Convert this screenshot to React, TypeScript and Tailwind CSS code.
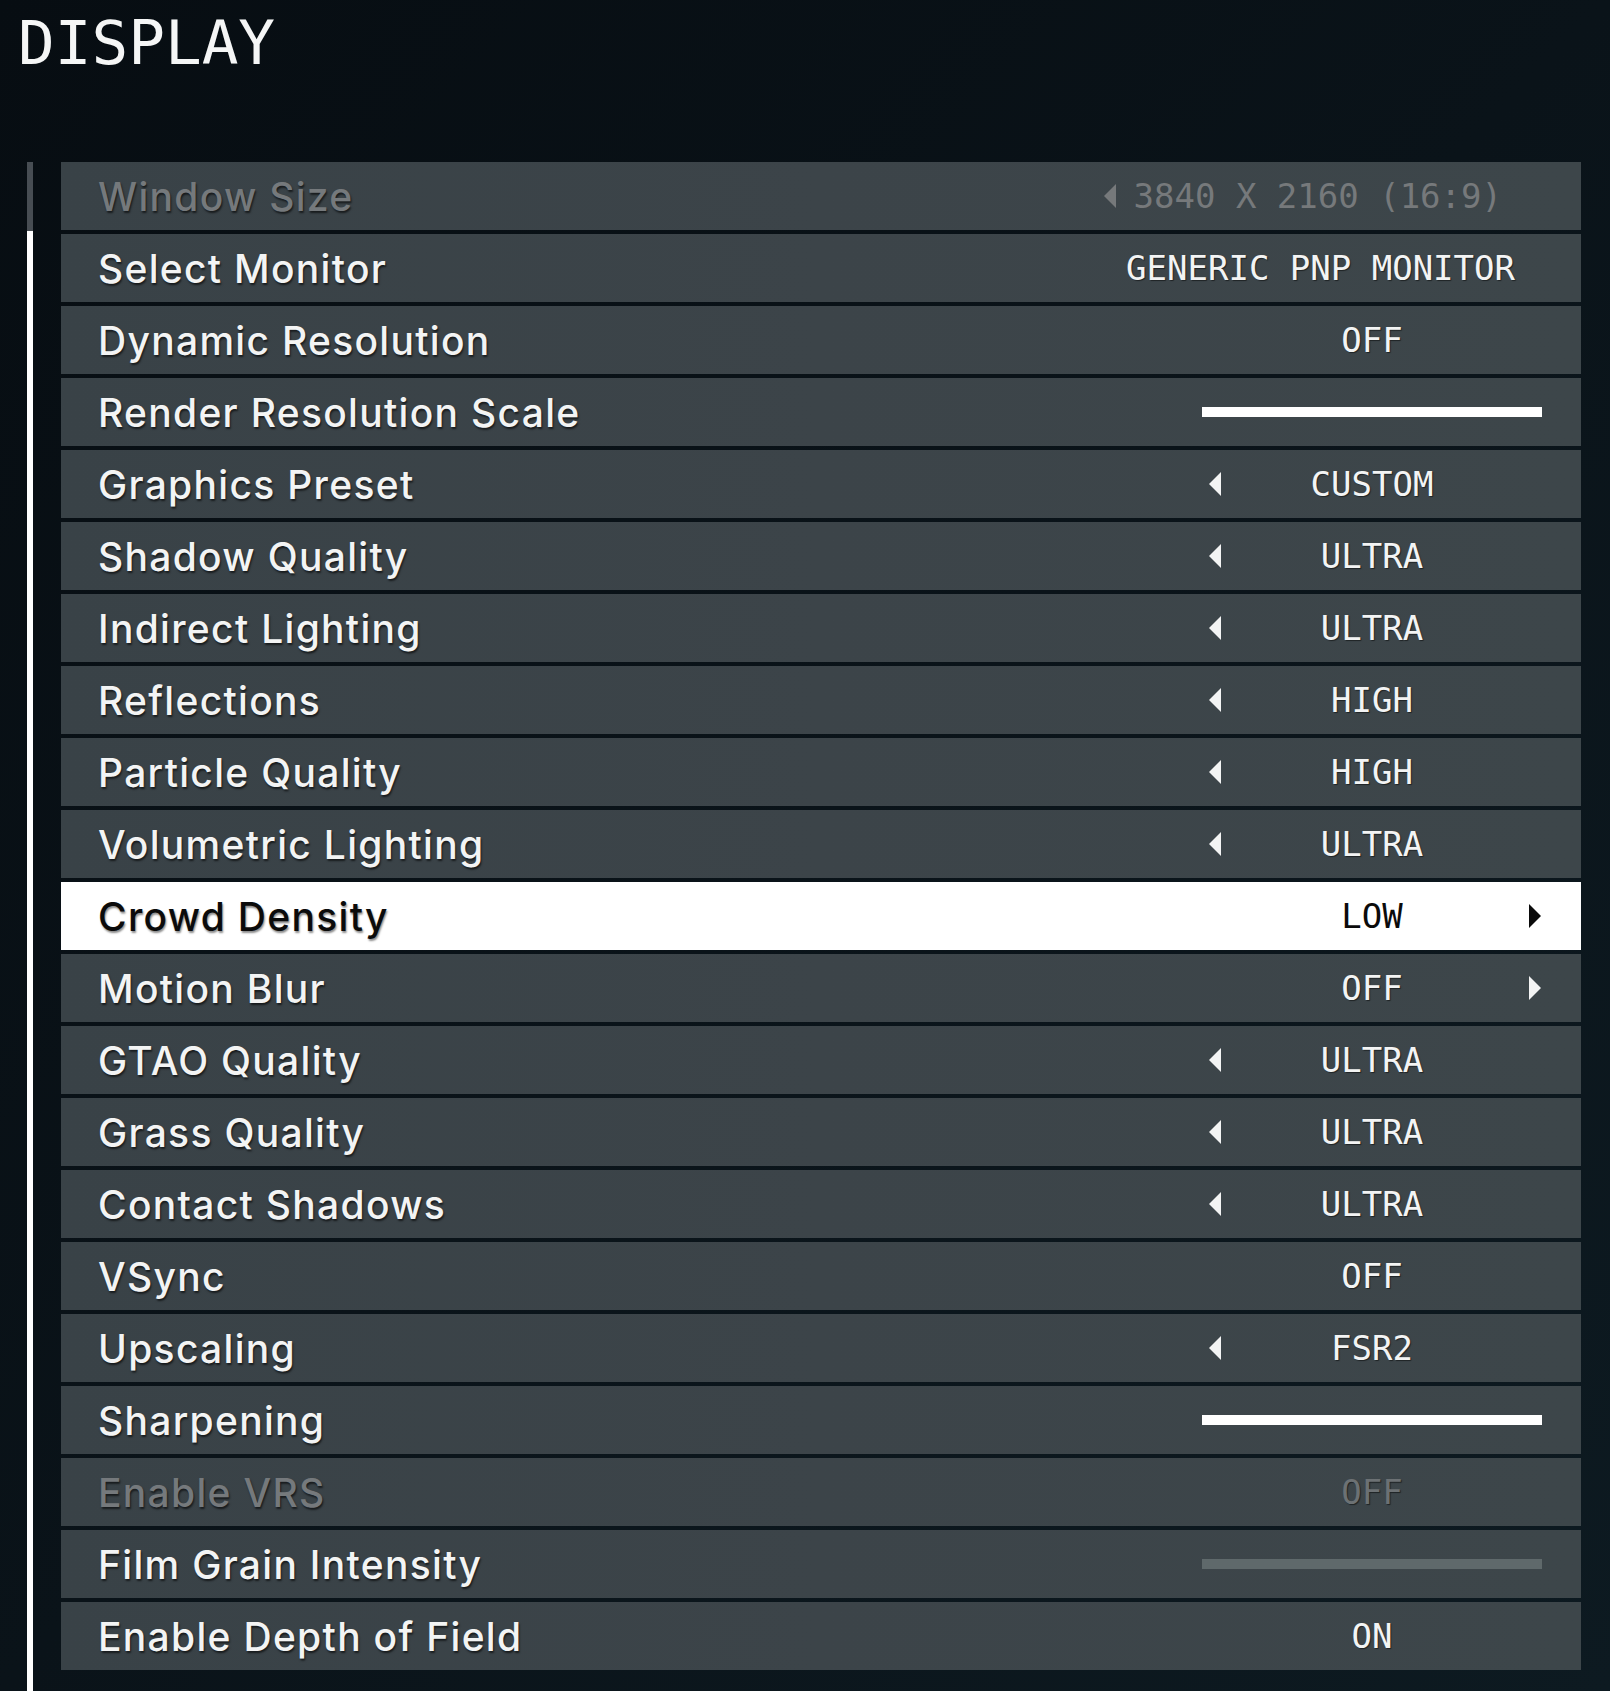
import React from 'react';

type Setting = {
  label: string;
  value?: string;
  left?: boolean;
  right?: boolean;
  slider?: 'on' | 'dim';
  disabled?: boolean;
  active?: boolean;
  wide?: 'window' | 'monitor';
};

const settings: Setting[] = [
  { label: 'Window Size', value: '3840 X 2160 (16:9)', disabled: true, wide: 'window' },
  { label: 'Select Monitor', value: 'GENERIC PNP MONITOR', wide: 'monitor' },
  { label: 'Dynamic Resolution', value: 'OFF' },
  { label: 'Render Resolution Scale', slider: 'on' },
  { label: 'Graphics Preset', value: 'CUSTOM', left: true },
  { label: 'Shadow Quality', value: 'ULTRA', left: true },
  { label: 'Indirect Lighting', value: 'ULTRA', left: true },
  { label: 'Reflections', value: 'HIGH', left: true },
  { label: 'Particle Quality', value: 'HIGH', left: true },
  { label: 'Volumetric Lighting', value: 'ULTRA', left: true },
  { label: 'Crowd Density', value: 'LOW', right: true, active: true },
  { label: 'Motion Blur', value: 'OFF', right: true },
  { label: 'GTAO Quality', value: 'ULTRA', left: true },
  { label: 'Grass Quality', value: 'ULTRA', left: true },
  { label: 'Contact Shadows', value: 'ULTRA', left: true },
  { label: 'VSync', value: 'OFF' },
  { label: 'Upscaling', value: 'FSR2', left: true },
  { label: 'Sharpening', slider: 'on' },
  { label: 'Enable VRS', value: 'OFF', disabled: true },
  { label: 'Film Grain Intensity', slider: 'dim' },
  { label: 'Enable Depth of Field', value: 'ON' },
];

const Arrow = ({ dir, color }: { dir: 'left' | 'right'; color: string }) => (
  <svg width="14" height="26" viewBox="0 0 14 26" className="block">
    {dir === 'left' ? (
      <path d="M13 1 L1 13 L13 25 Z" fill={color} />
    ) : (
      <path d="M1 1 L13 13 L1 25 Z" fill={color} />
    )}
  </svg>
);

const monoFont = "font-['DejaVu_Sans_Mono',monospace]";

const Row = ({ s }: { s: Setting }) => {
  const labelColor = s.active ? 'text-[#0b0b0b]' : s.disabled ? 'text-[#75797c]' : 'text-[#f3f4f4]';
  const valueColor = s.active ? 'text-[#0b0b0b]' : s.disabled ? 'text-[#6c7174]' : 'text-[#f3f4f4]';
  const arrowColor = s.active ? '#0b0b0b' : '#f3f4f4';

  return (
    <div
      className={`flex h-[68px] items-center ${
        s.active ? 'bg-white' : 'bg-gradient-to-r from-[#394247] via-[#3c4449] to-[#3d464a]'
      }`}
    >
      <div
        className={`flex-1 pl-[37px] font-['Inter',sans-serif] text-[39px] font-medium leading-none tracking-[1.3px] ${labelColor} ${
          s.active
            ? '[text-shadow:1px_2px_2px_rgba(0,0,0,0.45)]'
            : '[text-shadow:1px_2px_2px_rgba(0,0,0,0.6)]'
        }`}
      >
        {s.label}
      </div>

      {s.wide === 'window' && (
        <div className={`flex items-center gap-[17px] pr-[79px] ${monoFont} text-[34px] leading-none text-[#76797b]`}>
          <Arrow dir="left" color="#76797b" />
          <span>{s.value}</span>
        </div>
      )}

      {s.wide === 'monitor' && (
        <div className={`pr-[66px] ${monoFont} text-[34px] leading-none text-[#f3f4f4] [text-shadow:1px_1px_1px_rgba(0,0,0,0.5)]`}>
          {s.value}
        </div>
      )}

      {!s.wide && (
        <div className="mr-[39px] w-[340px]">
          {s.slider ? (
            <div className={`h-[10px] w-full ${s.slider === 'on' ? 'bg-white' : 'bg-[#5f696b]'}`} />
          ) : (
            <div className="grid grid-cols-[20px_1fr_20px] items-center">
              <div className="flex justify-end">{s.left && <Arrow dir="left" color={arrowColor} />}</div>
              <div
                className={`text-center ${monoFont} text-[34px] leading-none ${valueColor} ${
                  s.active ? '' : '[text-shadow:1px_1px_1px_rgba(0,0,0,0.5)]'
                }`}
              >
                {s.value}
              </div>
              <div className="flex justify-end">{s.right && <Arrow dir="right" color={arrowColor} />}</div>
            </div>
          )}
        </div>
      )}
    </div>
  );
};

export default function App() {
  return (
    <div className="flex min-h-screen w-full flex-col bg-gradient-to-br from-[#070d12] via-[#0a1319] to-[#0d1a21]">
      <h1 className={`pl-[18px] pt-[12px] ${monoFont} text-[61px] leading-none text-[#f5f6f6]`}>DISPLAY</h1>

      <div className="mt-[89px] flex flex-1">
        <div className="ml-[27px] flex w-[6px] flex-col">
          <div className="h-[69px] bg-[#474d53]" />
          <div className="flex-1 bg-white" />
        </div>

        <div className="ml-[28px] flex w-[1520px] flex-col gap-[4px]">
          {settings.map((s) => (
            <Row key={s.label} s={s} />
          ))}
        </div>
      </div>
    </div>
  );
}
